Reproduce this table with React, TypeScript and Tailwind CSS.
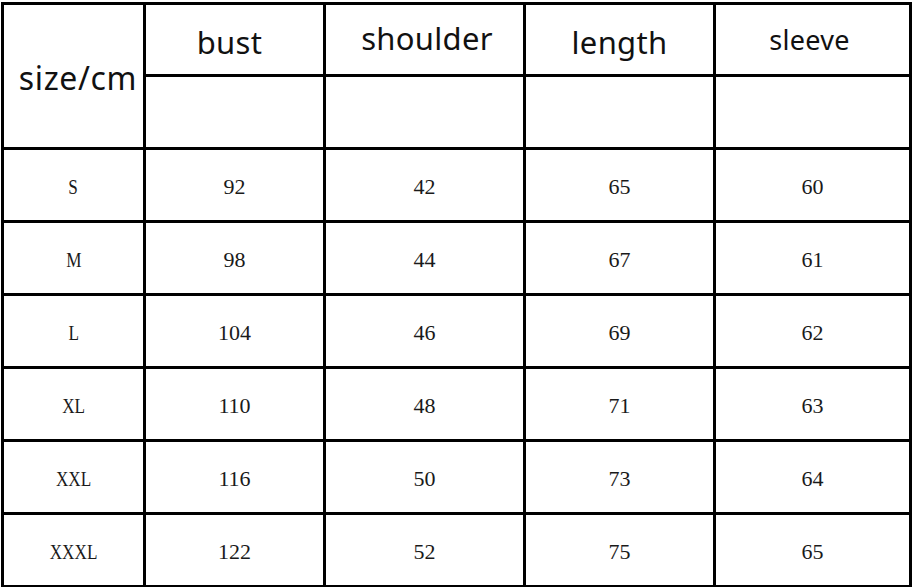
const rows = [
  ["S", "92", "42", "65", "60"],
  ["M", "98", "44", "67", "61"],
  ["L", "104", "46", "69", "62"],
  ["XL", "110", "48", "71", "63"],
  ["XXL", "116", "50", "73", "64"],
  ["XXXL", "122", "52", "75", "65"],
];

const sans = "font-['Noto_Sans',sans-serif] leading-none text-[#111]";
const serif = "font-['Liberation_Serif',serif] text-[22px] leading-none text-[#1a1a1a]";

export default function App() {
  return (
    <div className="h-[587px] w-[915px] overflow-hidden bg-white pl-[1px] pt-[2px]">
      <div className="grid w-fit grid-cols-[139px_177px_197px_187px_193px] grid-rows-[69px_70px_repeat(6,70px)] gap-[3px] bg-black p-[3px]">
        <div className={`row-span-2 flex justify-center bg-white pl-[9px] pt-[57px] text-[32px] tracking-[0.02em] ${sans}`}>
          size/cm
        </div>
        <div className={`flex justify-center bg-white pr-[10px] pt-[22px] text-[31px] tracking-[0.01em] ${sans}`}>
          bust
        </div>
        <div className={`flex justify-center bg-white pl-[5px] pt-[18px] text-[31px] tracking-[0.01em] ${sans}`}>
          shoulder
        </div>
        <div className={`flex justify-center bg-white pt-[22px] text-[31px] tracking-[0.01em] ${sans}`}>
          length
        </div>
        <div className={`flex justify-center bg-white pr-[6px] pt-[21px] text-[27px] tracking-[0.01em] ${sans}`}>
          sleeve
        </div>
        <div className="bg-white" />
        <div className="bg-white" />
        <div className="bg-white" />
        <div className="bg-white" />

        {rows.map((row) =>
          row.map((cell, i) => (
            <div
              key={row[0] + i}
              className={`flex items-center justify-center bg-white pt-[3px] ${serif}`}
            >
              <span className={i === 0 ? "inline-block scale-x-[0.78]" : ""}>
                {cell}
              </span>
            </div>
          ))
        )}
      </div>
    </div>
  );
}
